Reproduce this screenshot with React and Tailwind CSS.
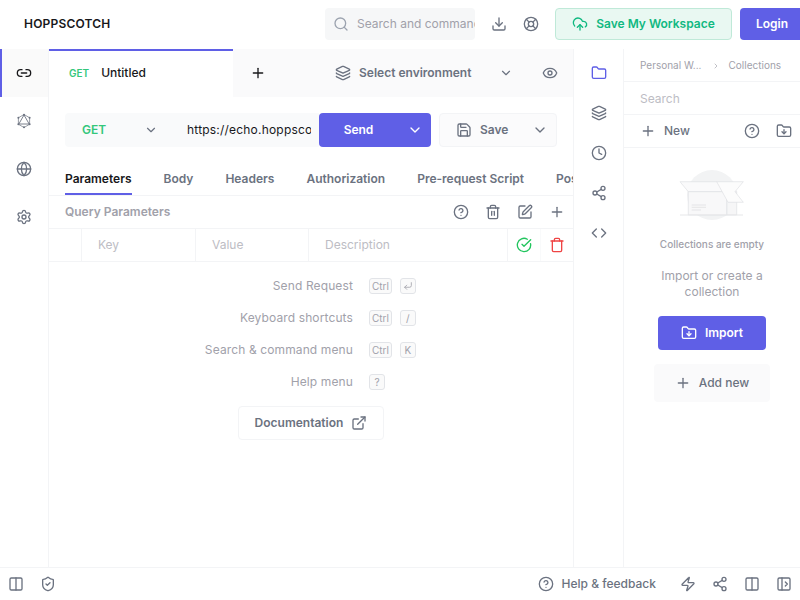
import {
  Link2, Globe, Settings, Folder, Layers, Clock, Share2, Code, Download, LifeBuoy, CloudUpload, Search,
  ChevronDown, ChevronRight, Eye, Save, CircleHelp, Trash2, Trash, SquarePen, Plus, CircleCheckBig, ExternalLink,
  FolderDown, Zap, ShieldCheck, Columns2, PanelLeftOpen, CornerDownLeft,
} from 'lucide-react'

const ACCENT = 'bg-[#5f5fe6]'

function GraphqlIcon() {
  return (
    <svg width="16" height="16" viewBox="0 0 16 16" fill="none" stroke="currentColor" strokeWidth="0.9">
      <path d="M8 1.5 13.6 4.75V11.25L8 14.5 2.4 11.25V4.75Z" strokeWidth="0.7" />
      <path d="M8 2 13.2 11H2.8Z" />
      <circle cx="8" cy="1.8" r="1" fill="currentColor" stroke="none" />
      <circle cx="13.6" cy="4.75" r="1" fill="currentColor" stroke="none" />
      <circle cx="13.6" cy="11.25" r="1" fill="currentColor" stroke="none" />
      <circle cx="8" cy="14.2" r="1" fill="currentColor" stroke="none" />
      <circle cx="2.4" cy="11.25" r="1" fill="currentColor" stroke="none" />
      <circle cx="2.4" cy="4.75" r="1" fill="currentColor" stroke="none" />
    </svg>
  )
}

function EmptyBox() {
  return (
    <svg width="66" height="54" viewBox="0 0 66 54" fill="none" stroke="#e0e1e4" strokeWidth="0.7">
      <circle cx="33" cy="25" r="25" fill="#f2f3f4" stroke="none" />
      <path d="M47.7 21.7H57.7V45H47.7Z" fill="#f6f6f7" />
      <path d="M1 11.7H37.7L47.7 21.7H9.3Z" fill="#fafafb" />
      <path d="M9.3 21.7H47.7V45H9.3Z" fill="#f8f8f9" />
      <path d="M37.7 11.7H64.3L56 21.7 64.3 32.3H49Z" fill="#fcfcfc" />
      <path d="M12.7 35H27M12.7 37.3H27M12.7 40H22" stroke="#dcdde0" />
      <path d="M1 45H64" stroke="#e6e7e9" strokeWidth="1" />
    </svg>
  )
}

function Kbd({ children }) {
  return (
    <span className="flex h-[16px] min-w-[16px] items-center justify-center rounded-[3px] border border-[#e2e4e8] bg-[#fafafa] px-[2px] text-[10px] leading-none text-[#a1a1aa]">
      {children}
    </span>
  )
}

function Shortcut({ label, keys }) {
  return (
    <div className="flex h-[32px] items-center">
      <span className="w-[304px] text-right tracking-[0.12px] text-[#a1a1aa]">{label}</span>
      <div className="ml-[16px] flex gap-[8px]">
        {keys.map((k, i) => <Kbd key={i}>{k}</Kbd>)}
      </div>
    </div>
  )
}

function RailIcon({ children, active }) {
  return (
    <div className={`flex h-[40px] w-full items-center justify-center ${active ? 'text-[#5f5fe6]' : 'text-[#6b7280]'}`}>
      {children}
    </div>
  )
}

export default function App() {
  const tabs = ['Parameters', 'Body', 'Headers', 'Authorization', 'Pre-request Script', 'Post-request Script', 'Variables']

  return (
    <div className="flex h-[600px] w-[800px] flex-col overflow-hidden bg-white text-[12px] text-[#6b7280] [font-family:Inter,sans-serif]">
      {/* top bar */}
      <header className="flex h-[49px] shrink-0 items-center pb-[1px]">
        <div className="w-[325px] shrink-0 pl-[24px] font-semibold tracking-[0.2px] text-[#18181b]">HOPPSCOTCH</div>
        <div className="flex h-[32px] w-[150px] shrink-0 items-center gap-[8px] overflow-hidden rounded bg-[#f6f7f8] pl-[8px] text-[#a1a1aa]">
          <Search size={16} className="shrink-0 text-[#9ca3af]" />
          <span className="whitespace-nowrap">Search and commands</span>
        </div>
        <div className="ml-[8px] flex w-[32px] shrink-0 justify-center"><Download size={16} /></div>
        <div className="flex w-[32px] shrink-0 justify-center"><LifeBuoy size={16} /></div>
        <button className="ml-[8px] flex h-[32px] w-[177px] shrink-0 items-center justify-center gap-[8px] rounded border border-[#bfe9d8] bg-[#e9f8f2] font-semibold text-[#10b981]">
          <CloudUpload size={16} />
          Save My Workspace
        </button>
        <button className={`ml-[8px] h-[32px] w-[64px] shrink-0 rounded font-semibold text-white ${ACCENT}`}>Login</button>
      </header>

      <div className="flex min-h-0 flex-1">
        {/* left rail */}
        <aside className="flex w-[49px] shrink-0 flex-col border-r border-[#f3f4f6] text-[#6b7280]">
          <div className="flex h-[48px] items-center justify-center border-l-2 border-[#5f5fe6] bg-[#fafafa] pr-[2px] text-[#18181b]"><Link2 size={16} /></div>
          <div className="flex h-[48px] items-center justify-center"><GraphqlIcon /></div>
          <div className="flex h-[48px] items-center justify-center"><Globe size={16} /></div>
          <div className="flex h-[48px] items-center justify-center"><Settings size={16} /></div>
        </aside>

        {/* request panel */}
        <main className="flex w-[525px] shrink-0 flex-col overflow-hidden border-r border-[#f3f4f6]">
          <div className="flex h-[48px] shrink-0 items-center bg-[#fafafb]">
            <div className="flex h-full w-[184px] items-center border-t-2 border-[#5f5fe6] bg-white pb-[2px] pl-[20px]">
              <span className="text-[10px] font-semibold text-[#34c77b]">GET</span>
              <span className="ml-[12px] font-medium text-[#18181b]">Untitled</span>
            </div>
            <div className="flex w-[50px] justify-center text-[#18181b]"><Plus size={16} /></div>
            <div className="ml-[44px] flex w-[199px] items-center font-semibold text-[#6b7280]">
              <Layers size={16} className="ml-[8px]" />
              <span className="ml-[8px]">Select environment</span>
              <ChevronDown size={14} className="ml-auto mr-[13px]" />
            </div>
            <div className="ml-[8px] flex w-[32px] justify-center"><Eye size={16} /></div>
          </div>

          {/* url bar */}
          <div className="mt-[16px] flex h-[34px] shrink-0 px-[16px]">
            <div className="flex w-[254px] items-center rounded-l bg-[#f9fafb]">
              <span className="w-[79px] pl-[17px] font-semibold text-[#34c77b]">GET</span>
              <ChevronDown size={14} />
              <span className="ml-[29px] w-[124px] overflow-hidden whitespace-nowrap tracking-[0.2px] text-[#18181b]">https://echo.hoppscotch.io</span>
            </div>
            <button className={`flex w-[112px] items-center rounded font-semibold text-white ${ACCENT}`}>
              <span className="w-[79px] text-center">Send</span>
              <span className="flex flex-1 justify-center"><ChevronDown size={16} /></span>
            </button>
            <button className="ml-[8px] flex w-[118px] items-center rounded border border-[#f3f4f6] bg-[#fbfbfc] font-semibold">
              <Save size={16} className="ml-[16px]" />
              <span className="ml-[8px]">Save</span>
              <ChevronDown size={16} className="ml-auto mr-[8px]" />
            </button>
          </div>

          {/* request tabs */}
          <div className="mt-[14px] flex h-[35px] shrink-0 gap-[32px] overflow-hidden whitespace-nowrap border-b border-[#f3f4f6] pl-[16px] font-semibold">
            {tabs.map((t, i) => (
              <div key={t} className={`flex h-[34px] shrink-0 items-center border-b-2 pt-[4px] ${i === 0 ? 'border-[#5f5fe6] text-[#18181b]' : 'border-transparent'}`}>
                {t}
              </div>
            ))}
          </div>

          <div className="flex h-[33px] shrink-0 items-center border-b border-[#f3f4f6] pl-[16px]">
            <span className="font-semibold text-[#a1a1aa]">Query Parameters</span>
            <div className="ml-auto flex">
              <div className="flex w-[32px] justify-center"><CircleHelp size={16} /></div>
              <div className="flex w-[32px] justify-center"><Trash2 size={16} /></div>
              <div className="flex w-[32px] justify-center"><SquarePen size={16} /></div>
              <div className="flex w-[32px] justify-center"><Plus size={16} /></div>
            </div>
          </div>

          <div className="flex h-[33px] shrink-0 border-b border-[#f3f4f6] text-[#bdbdc4]">
            <div className="w-[33px] border-r border-[#f3f4f6]" />
            <div className="flex w-[114px] items-center border-r border-[#f3f4f6] pl-[16px]">Key</div>
            <div className="flex w-[113px] items-center border-r border-[#f3f4f6] pl-[16px]">Value</div>
            <div className="flex w-[199px] items-center border-r border-[#f3f4f6] pl-[16px]">Description</div>
            <div className="flex w-[33px] items-center justify-center border-r border-[#f9fafb] text-[#22c55e]"><CircleCheckBig size={16} /></div>
            <div className="flex flex-1 items-center justify-center text-[#ef4444]"><Trash size={16} /></div>
          </div>

          {/* shortcuts */}
          <div className="mt-[8px] flex flex-col">
            <Shortcut label="Send Request" keys={['Ctrl', <CornerDownLeft key="e" size={10} />]} />
            <Shortcut label="Keyboard shortcuts" keys={['Ctrl', '/']} />
            <Shortcut label="Search & command menu" keys={['Ctrl', 'K']} />
            <Shortcut label="Help menu" keys={['?']} />
          </div>
          <button className="ml-[189px] mt-[8px] flex h-[34px] w-[146px] items-center justify-center gap-[8px] rounded border border-[#f3f4f6] font-semibold">
            Documentation
            <ExternalLink size={16} />
          </button>
        </main>

        {/* right rail */}
        <aside className="flex w-[50px] shrink-0 flex-col border-r border-[#f3f4f6] pt-[4px]">
          <RailIcon active><Folder size={16} /></RailIcon>
          <RailIcon><Layers size={16} /></RailIcon>
          <RailIcon><Clock size={16} /></RailIcon>
          <RailIcon><Share2 size={16} /></RailIcon>
          <RailIcon><Code size={16} /></RailIcon>
        </aside>

        {/* collections */}
        <section className="flex min-w-0 flex-1 flex-col">
          <div className="flex h-[33px] shrink-0 items-center border-b border-[#f3f4f6] pl-[16px] pt-[1px] text-[10px] text-[#a1a1aa]">
            <span>Personal W...</span>
            <ChevronRight size={8} className="ml-[10px]" />
            <span className="ml-[9px]">Collections</span>
          </div>
          <div className="flex h-[33px] shrink-0 items-center border-b border-[#f3f4f6] pl-[16px] pt-[1px] text-[#bdbdc4]">Search</div>
          <div className="flex h-[33px] shrink-0 items-center border-b border-[#f3f4f6] font-medium">
            <Plus size={16} className="ml-[16px]" />
            <span className="ml-[8px]">New</span>
            <CircleHelp size={16} className="ml-auto" />
            <FolderDown size={16} className="ml-[16px] mr-[8px]" />
          </div>
          <div className="flex flex-col items-center pt-[22px]">
            <EmptyBox />
            <p className="mt-[13px] text-[10px] font-medium text-[#a1a1aa]">Collections are empty</p>
            <p className="mt-[16px] w-[120px] text-center leading-[16px] text-[#a1a1aa]">Import or create a collection</p>
            <button className={`mt-[16px] flex h-[34px] w-[108px] items-center justify-center gap-[8px] rounded font-semibold text-white ${ACCENT}`}>
              <FolderDown size={16} />
              Import
            </button>
            <button className="mt-[14px] flex h-[38px] w-[116px] items-center justify-center gap-[8px] rounded bg-[#fafafb] font-medium">
              <Plus size={16} />
              Add new
            </button>
          </div>
        </section>
      </div>

      {/* footer */}
      <footer className="flex h-[33px] shrink-0 items-center border-t border-[#f3f4f6]">
        <div className="flex w-[32px] justify-center"><Columns2 size={16} /></div>
        <div className="flex w-[32px] justify-center"><ShieldCheck size={16} /></div>
        <div className="ml-auto flex items-center">
          <CircleHelp size={16} />
          <span className="ml-[8px] mr-[16px] font-medium">Help & feedback</span>
          <div className="flex w-[32px] justify-center"><Zap size={16} /></div>
          <div className="flex w-[32px] justify-center"><Share2 size={16} /></div>
          <div className="flex w-[32px] justify-center"><Columns2 size={16} /></div>
          <div className="flex w-[32px] justify-center"><PanelLeftOpen size={16} /></div>
        </div>
      </footer>
    </div>
  )
}
